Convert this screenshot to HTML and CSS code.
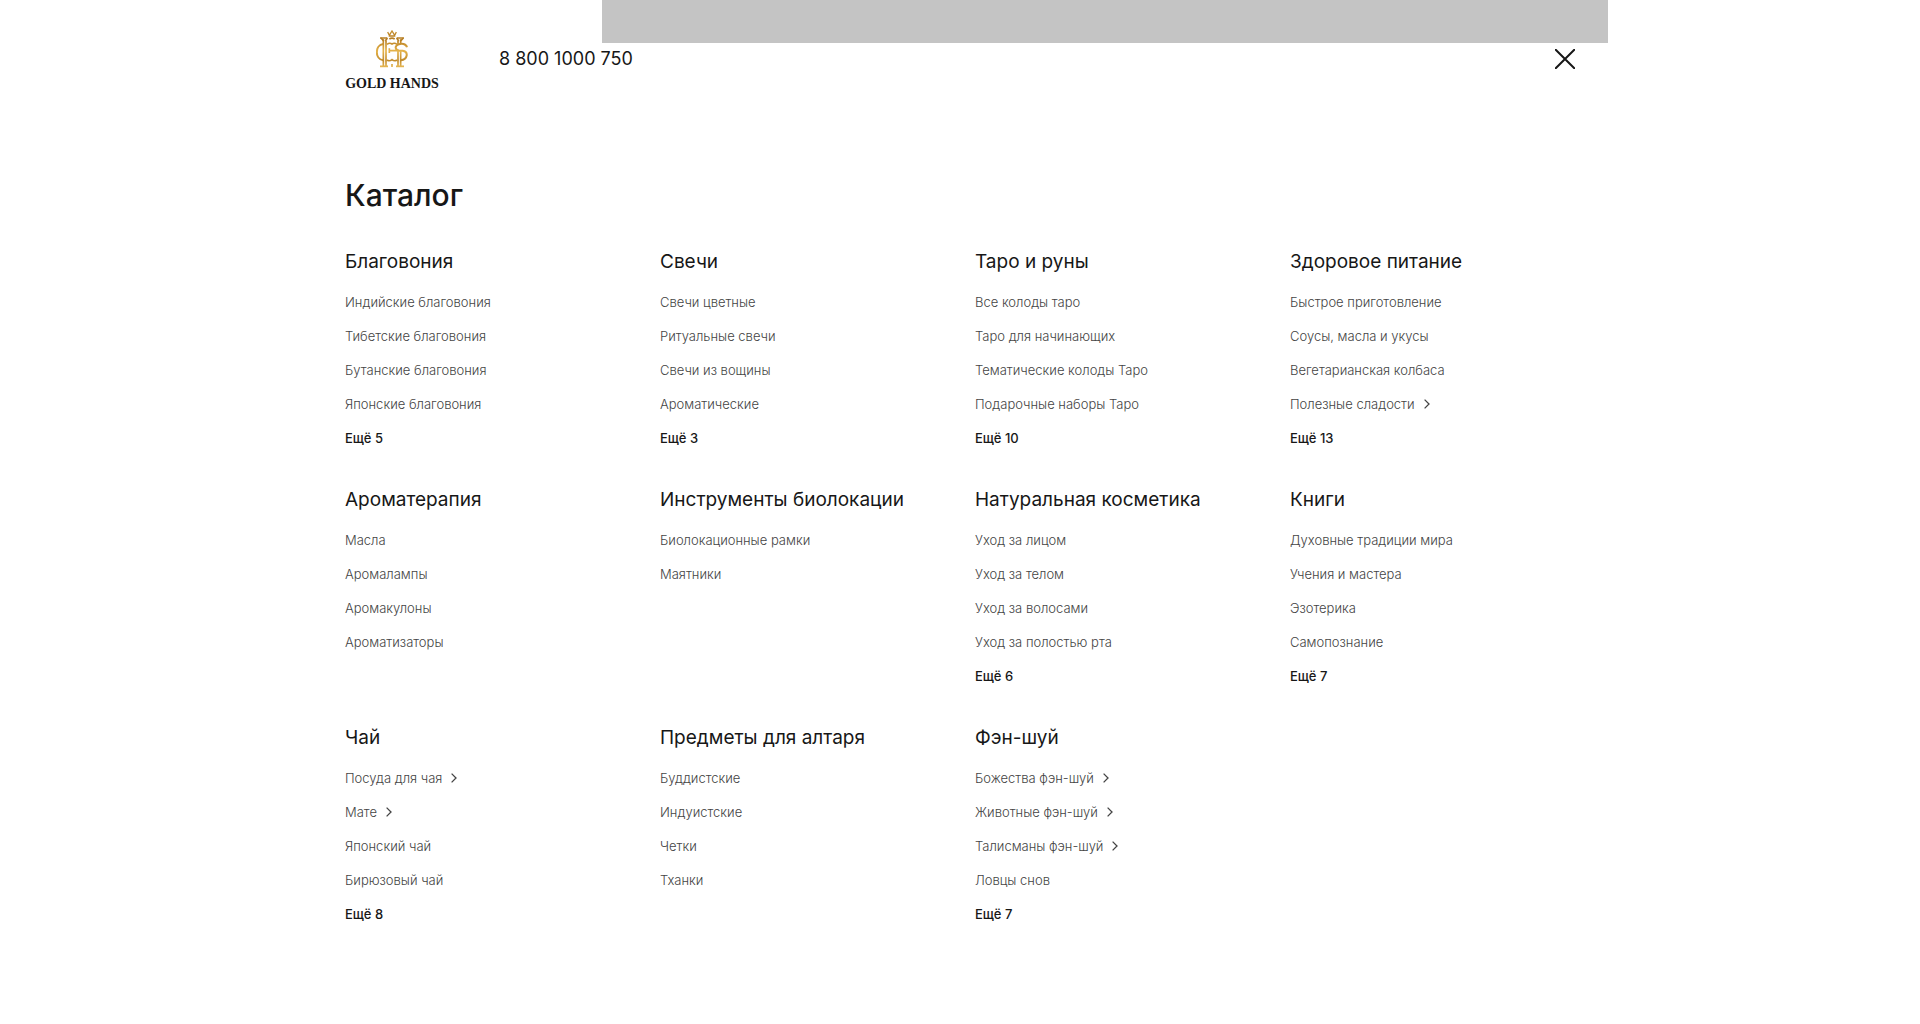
FILE: index.html
```html
<!DOCTYPE html>
<html lang="ru">
<head>
<meta charset="utf-8">
<meta name="viewport" content="width=device-width, initial-scale=1">
<title>Каталог — Gold Hands</title>
<link rel="stylesheet" href="styles.css">
</head>
<body>
<svg class="sprite" aria-hidden="true">
  <symbol id="chevron" viewBox="0 0 6 10"><path d="M.6.6L5 5 .6 9.4" fill="none" stroke="currentColor" stroke-width="1.3"/></symbol>
</svg>
<div class="banner" aria-hidden="true"></div>
<div class="container">
  <header class="header">
    <a class="logo" href="#">
      <svg class="emblem" viewBox="0 0 96 114" aria-hidden="true">
        <defs>
          <linearGradient id="gold" gradientUnits="userSpaceOnUse" x1="0" y1="0" x2="0" y2="114">
            <stop offset="0" stop-color="#c8922f"/>
            <stop offset=".25" stop-color="#b57c22"/>
            <stop offset=".55" stop-color="#e5b34a"/>
            <stop offset=".8" stop-color="#c08a2b"/>
            <stop offset="1" stop-color="#ecbe58"/>
          </linearGradient>
        </defs>
        <g fill="none" stroke="url(#gold)" stroke-width="5">
          <path stroke-width="4" d="M35 6l5 10 8-13 8 13 5-10M38 18h20"/>
          <path d="M12 24h22M62 24h22M12 109h24M60 109h24"/>
          <path d="M15 24l8 9M34 24l-6 9M62 24l6 9M82 24l-8 9"/>
          <path d="M22 28v80M30 32v76M66 32v10M66 64v44M74 28v14M74 64v44"/>
          <path d="M40 27q8-5 16 0"/>
          <path d="M33 43q8-6 15-1 7-5 15 1"/>
          <path stroke-width="6" d="M22 42C-4 45-4 88 22 91"/>
          <path stroke-width="6" d="M93 52C90 40 76 40 68 43 54 48 58 61 70 62h10c18 3 16 26-6 29"/>
          <path d="M38 62h30M40 55v14"/>
          <path d="M33 90q8 5 15-1 7 6 15 1"/>
          <path d="M48 102v9"/>
        </g>
      </svg>
      <span class="logo-name">GOLD HANDS</span>
    </a>
    <a class="phone" href="tel:88001000750">8 800 1000 750</a>
    <button class="close" type="button" aria-label="Закрыть">
      <svg viewBox="0 0 20 20" aria-hidden="true"><path d="M0 0l20 20M20 0L0 20" stroke="currentColor" stroke-width="2"/></svg>
    </button>
  </header>
  <main>
    <h1>Каталог</h1>
    <div class="catalog">
      <section>
        <h2>Благовония</h2>
        <ul>
          <li><a href="#">Индийские благовония</a></li>
          <li><a href="#">Тибетские благовония</a></li>
          <li><a href="#">Бутанские благовония</a></li>
          <li><a href="#">Японские благовония</a></li>
          <li><a class="more" href="#">Ещё 5</a></li>
        </ul>
      </section>
      <section>
        <h2>Свечи</h2>
        <ul>
          <li><a href="#">Свечи цветные</a></li>
          <li><a href="#">Ритуальные свечи</a></li>
          <li><a href="#">Свечи из вощины</a></li>
          <li><a href="#">Ароматические</a></li>
          <li><a class="more" href="#">Ещё 3</a></li>
        </ul>
      </section>
      <section>
        <h2>Таро и руны</h2>
        <ul>
          <li><a href="#">Все колоды таро</a></li>
          <li><a href="#">Таро для начинающих</a></li>
          <li><a href="#">Тематические колоды Таро</a></li>
          <li><a href="#">Подарочные наборы Таро</a></li>
          <li><a class="more" href="#">Ещё 10</a></li>
        </ul>
      </section>
      <section>
        <h2>Здоровое питание</h2>
        <ul>
          <li><a href="#">Быстрое приготовление</a></li>
          <li><a href="#">Соусы, масла и укусы</a></li>
          <li><a href="#">Вегетарианская колбаса</a></li>
          <li><a href="#">Полезные сладости<svg class="chevron"><use href="#chevron"/></svg></a></li>
          <li><a class="more" href="#">Ещё 13</a></li>
        </ul>
      </section>
      <section>
        <h2>Ароматерапия</h2>
        <ul>
          <li><a href="#">Масла</a></li>
          <li><a href="#">Аромалампы</a></li>
          <li><a href="#">Аромакулоны</a></li>
          <li><a href="#">Ароматизаторы</a></li>
        </ul>
      </section>
      <section>
        <h2>Инструменты биолокации</h2>
        <ul>
          <li><a href="#">Биолокационные рамки</a></li>
          <li><a href="#">Маятники</a></li>
        </ul>
      </section>
      <section>
        <h2>Натуральная косметика</h2>
        <ul>
          <li><a href="#">Уход за лицом</a></li>
          <li><a href="#">Уход за телом</a></li>
          <li><a href="#">Уход за волосами</a></li>
          <li><a href="#">Уход за полостью рта</a></li>
          <li><a class="more" href="#">Ещё 6</a></li>
        </ul>
      </section>
      <section>
        <h2>Книги</h2>
        <ul>
          <li><a href="#">Духовные традиции мира</a></li>
          <li><a href="#">Учения и мастера</a></li>
          <li><a href="#">Эзотерика</a></li>
          <li><a href="#">Самопознание</a></li>
          <li><a class="more" href="#">Ещё 7</a></li>
        </ul>
      </section>
      <section>
        <h2>Чай</h2>
        <ul>
          <li><a href="#">Посуда для чая<svg class="chevron"><use href="#chevron"/></svg></a></li>
          <li><a href="#">Мате<svg class="chevron"><use href="#chevron"/></svg></a></li>
          <li><a href="#">Японский чай</a></li>
          <li><a href="#">Бирюзовый чай</a></li>
          <li><a class="more" href="#">Ещё 8</a></li>
        </ul>
      </section>
      <section>
        <h2>Предметы для алтаря</h2>
        <ul>
          <li><a href="#">Буддистские</a></li>
          <li><a href="#">Индуистские</a></li>
          <li><a href="#">Четки</a></li>
          <li><a href="#">Тханки</a></li>
        </ul>
      </section>
      <section>
        <h2>Фэн-шуй</h2>
        <ul>
          <li><a href="#">Божества фэн-шуй<svg class="chevron"><use href="#chevron"/></svg></a></li>
          <li><a href="#">Животные фэн-шуй<svg class="chevron"><use href="#chevron"/></svg></a></li>
          <li><a href="#">Талисманы фэн-шуй<svg class="chevron"><use href="#chevron"/></svg></a></li>
          <li><a href="#">Ловцы снов</a></li>
          <li><a class="more" href="#">Ещё 7</a></li>
        </ul>
      </section>
    </div>
  </main>
</div>
</body>
</html>
```
FILE: styles.css
```css
* {
  box-sizing: border-box;
}

body {
  margin: 0;
  background: #fff;
  color: #171717;
  font-family: Inter, "Noto Sans", sans-serif;
}

a {
  color: inherit;
  text-decoration: none;
}

.sprite {
  display: none;
}

/* Strip that hangs over the top edge of the page */
.banner {
  position: absolute;
  top: 0;
  left: calc(50% - 358px);
  width: 1006px;
  height: 43px;
  background: #c4c4c4;
}

.container {
  max-width: 1270px;
  margin: 0 auto;
  padding: 30px 20px;
}

.header {
  display: flex;
  align-items: center;
  height: 58px;
}

.logo {
  display: flex;
  flex-direction: column;
  align-items: center;
  align-self: flex-start;
  gap: 8px;
  width: 94px;
  margin-right: 60px;
}

.emblem {
  width: 32px;
  height: 38px;
}

.logo-name {
  font: bold 14px/16px "Liberation Serif", serif;
  white-space: nowrap;
}

.phone {
  font-size: 18px;
  line-height: 24px;
}

.close {
  display: flex;
  margin-left: auto;
  padding: 0;
  border: 0;
  background: none;
  color: inherit;
}

.close svg {
  width: 20px;
  height: 20px;
}

h1 {
  margin: 87px 0 35px;
  font-size: 30px;
  line-height: 40px;
  font-weight: 500;
}

.catalog {
  display: grid;
  grid-template-columns: repeat(4, 1fr);
  gap: 40px 30px;
}

h2 {
  margin: 0;
  font-size: 19px;
  line-height: 24px;
  font-weight: 400;
  white-space: nowrap;
}

ul {
  display: grid;
  gap: 14px;
  margin: 18px 0 0;
  padding: 0;
  list-style: none;
}

li {
  font-size: 13px;
  line-height: 20px;
  font-weight: 300;
  color: #444;
}

li a {
  display: inline-flex;
  align-items: center;
}

.more {
  font-weight: 500;
  color: #171717;
}

.chevron {
  width: 6px;
  height: 10px;
  margin-left: 9px;
}
```
